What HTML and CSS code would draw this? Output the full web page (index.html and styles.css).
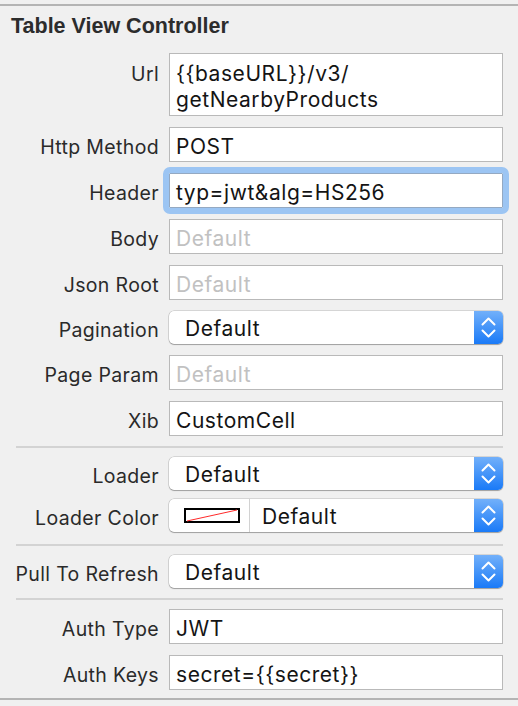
FILE: index.html
```html
<!DOCTYPE html>
<html>
<head>
<meta charset="utf-8">
<link rel="stylesheet" href="styles.css">
</head>
<body>
<div class="panel">
  <div class="title">Table View Controller</div>

  <div class="form">
    <div class="lbl lbl-top">Url</div>
    <div class="field field-multi">{{baseURL}}/v3/<br>getNearbyProducts</div>

    <div class="lbl">Http Method</div>
    <div class="field">POST</div>

    <div class="lbl">Header</div>
    <div class="field focus">typ=jwt&amp;alg=HS256</div>

    <div class="lbl">Body</div>
    <div class="field placeholder">Default</div>

    <div class="lbl">Json Root</div>
    <div class="field placeholder">Default</div>

    <div class="lbl">Pagination</div>
    <div class="popup"><span class="popup-text">Default</span><span class="stepper"><svg width="29" height="33" viewBox="0 0 29 33"><path d="M8.5 13.5 L14.5 7.5 L20.5 13.5" /><path d="M8.5 19.5 L14.5 25.5 L20.5 19.5" /></svg></span></div>

    <div class="lbl">Page Param</div>
    <div class="field placeholder">Default</div>

    <div class="lbl">Xib</div>
    <div class="field">CustomCell</div>
  </div>

  <div class="sep"></div>

  <div class="form form-tight">
    <div class="lbl">Loader</div>
    <div class="popup"><span class="popup-text">Default</span><span class="stepper"><svg width="29" height="33" viewBox="0 0 29 33"><path d="M8.5 13.5 L14.5 7.5 L20.5 13.5" /><path d="M8.5 19.5 L14.5 25.5 L20.5 19.5" /></svg></span></div>

    <div class="lbl">Loader Color</div>
    <div class="popup">
      <span class="swatch-cell"><svg class="swatch" width="56" height="15" viewBox="0 0 56 15"><rect x="1" y="1" width="54" height="13" fill="#fff" stroke="#000" stroke-width="2"/><line x1="3" y1="13" x2="53" y2="2" stroke="#ff2a2a" stroke-width="1"/></svg></span>
      <span class="popup-text popup-text-color">Default</span>
      <span class="stepper"><svg width="29" height="33" viewBox="0 0 29 33"><path d="M8.5 13.5 L14.5 7.5 L20.5 13.5" /><path d="M8.5 19.5 L14.5 25.5 L20.5 19.5" /></svg></span>
    </div>
  </div>

  <div class="sep sep-wide"></div>

  <div class="form">
    <div class="lbl">Pull To Refresh</div>
    <div class="popup"><span class="popup-text">Default</span><span class="stepper"><svg width="29" height="33" viewBox="0 0 29 33"><path d="M8.5 13.5 L14.5 7.5 L20.5 13.5" /><path d="M8.5 19.5 L14.5 25.5 L20.5 19.5" /></svg></span></div>
  </div>

  <div class="sep"></div>

  <div class="form">
    <div class="lbl">Auth Type</div>
    <div class="field">JWT</div>

    <div class="lbl">Auth Keys</div>
    <div class="field">secret={{secret}}</div>
  </div>

  <div class="bottom-line"></div>
</div>
</body>
</html>
```

FILE: styles.css
```css
html, body {
  margin: 0;
  padding: 0;
  background: #f0f0f0;
}

body {
  width: 518px;
  height: 706px;
  overflow: hidden;
  font-family: Inter, "Liberation Sans", sans-serif;
}

.panel {
  margin-top: 4px;
  border-top: 2px solid #b4b4b4;
}

.title {
  margin: 8px 0 0 11px;
  font-family: "Liberation Sans", Arial, sans-serif;
  font-size: 21.5px;
  font-weight: 700;
  line-height: 24px;
  color: #2c2c2c;
}

.form {
  margin-top: 15px;
  display: grid;
  grid-template-columns: 159px 334px;
  column-gap: 10px;
  row-gap: 11px;
  align-items: center;
}

.form-tight {
  row-gap: 9px;
}

.sep + .form {
  margin-top: 0;
}

.lbl {
  padding-top: 4px;
  text-align: right;
  font-size: 19.5px;
  letter-spacing: 0.35px;
  line-height: 26px;
  color: #2a2a2a;
  white-space: nowrap;
}

.lbl-top {
  align-self: start;
  padding-top: 8px;
}

.field {
  box-sizing: border-box;
  height: 35px;
  padding: 3px 6px 0;
  border: 1px solid #b9b9b9;
  background: #fff;
  font-size: 21px;
  letter-spacing: 0.55px;
  line-height: 31px;
  color: #141414;
  white-space: nowrap;
}

.field-multi {
  height: 63px;
  padding: 7px 6px 2px;
  line-height: 26px;
}

.placeholder {
  color: #c1c1c1;
}

.focus {
  border-color: #94a9c2;
  border-radius: 1px;
  outline: 6px solid #9cc5f3;
  outline-offset: 0;
}

.popup {
  height: 33px;
  display: flex;
  align-items: stretch;
  background: #fff;
  border-radius: 5px;
  box-shadow: 0 0 0 0.5px rgba(0, 0, 0, 0.22), 0 1px 1px rgba(0, 0, 0, 0.25);
}

.popup-text {
  flex: 1;
  padding: 2px 0 0 16px;
  font-size: 21px;
  letter-spacing: 0.55px;
  line-height: 31px;
  color: #141414;
}

.popup-text-color {
  padding-left: 12px;
}

.swatch-cell {
  width: 81px;
  display: flex;
  align-items: center;
  padding-left: 15px;
  box-sizing: border-box;
  border-right: 1px solid #d2d2d2;
}

.swatch {
  display: block;
}

.stepper {
  width: 29px;
  border-radius: 0 5px 5px 0;
  background: linear-gradient(#72b0fa, #1a7af7);
}

.stepper svg {
  display: block;
  fill: none;
  stroke: #fff;
  stroke-width: 2;
  stroke-linecap: round;
  stroke-linejoin: round;
}

.sep {
  height: 2px;
  margin: 10px 15px 9px 16px;
  background: #d3d3d3;
}

.sep-wide {
  margin-top: 12px;
}

.bottom-line {
  margin-top: 8px;
  height: 2px;
  background: #b4b4b4;
}
```
